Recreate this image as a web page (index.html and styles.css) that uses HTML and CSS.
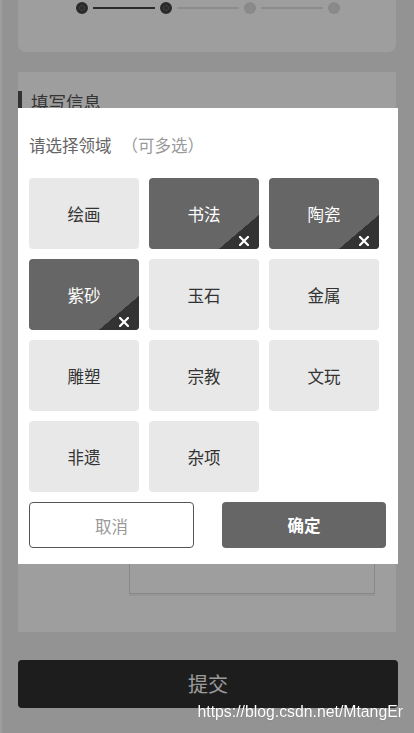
FILE: index.html
```html
<!DOCTYPE html>
<html>
	<head>
		<meta charset="utf-8">
		<title>填写信息</title>
		<link rel="stylesheet" href="styles.css">
	</head>
	<body>
		<div class="page">
			<div class="step_box">
				<div class="steps">
					<span class="dot on"></span><span class="line on"></span>
					<span class="dot on"></span><span class="line"></span>
					<span class="dot"></span><span class="line"></span>
					<span class="dot"></span>
				</div>
			</div>
			<div class="info_box">
				<div class="info_tit">填写信息</div>
				<div class="info_body">
					<div class="info_area"></div>
				</div>
			</div>
			<div class="submit">提交</div>
		</div>

		<!-- 遮罩 -->
		<div class="mask"></div>

		<!-- 选择领域 -->
		<div class="field_pop">
			<div class="pop_tit">请选择领域<span>（可多选）</span></div>
			<div class="field_list">
				<div class="field_item">绘画</div>
				<div class="field_item active">书法<span class="tick"><svg width="10" height="10" viewBox="0 0 10 10"><path d="M1 1L9 9M9 1L1 9" stroke="#fff" stroke-width="2.2" stroke-linecap="square"/></svg></span></div>
				<div class="field_item active">陶瓷<span class="tick"><svg width="10" height="10" viewBox="0 0 10 10"><path d="M1 1L9 9M9 1L1 9" stroke="#fff" stroke-width="2.2" stroke-linecap="square"/></svg></span></div>
				<div class="field_item active">紫砂<span class="tick"><svg width="10" height="10" viewBox="0 0 10 10"><path d="M1 1L9 9M9 1L1 9" stroke="#fff" stroke-width="2.2" stroke-linecap="square"/></svg></span></div>
				<div class="field_item">玉石</div>
				<div class="field_item">金属</div>
				<div class="field_item">雕塑</div>
				<div class="field_item">宗教</div>
				<div class="field_item">文玩</div>
				<div class="field_item">非遗</div>
				<div class="field_item">杂项</div>
			</div>
			<div class="pop_btns">
				<div class="btn_cancel">取消</div>
				<div class="btn_ok">确定</div>
			</div>
		</div>

		<div class="watermark">https://blog.csdn.net/MtangEr</div>
	</body>
</html>
```

FILE: styles.css
```css
html, body {
	margin: 0;
	height: 100%;
	overflow: hidden;
}
body {
	background: #ededed;
	font-family: "Noto Sans CJK SC", "Liberation Sans", sans-serif;
	color: #333;
}
.page {
	border-left: 2px solid #ffffff;
	padding-left: 16px;
	height: 100%;
	box-sizing: border-box;
}

/* 步骤 */
.step_box {
	width: 378px;
	height: 52px;
	background: #fff;
	border-radius: 0 0 8px 8px;
	box-sizing: border-box;
}
.steps {
	display: flex;
	align-items: center;
	padding: 2px 0 0 58px;
}
.steps .dot {
	width: 12px;
	height: 12px;
	border-radius: 50%;
	background: #dedede;
	box-sizing: border-box;
}
.steps .dot.on {
	background: #444;
	border: 3px solid #444;
	box-shadow: inset 0 0 0 1px #6a6a6a;
}
.steps .line {
	width: 62px;
	height: 2px;
	margin: 0 5px;
	background: #e2e2e2;
}
.steps .line.on {
	background: #444;
}

/* 填写信息 */
.info_box {
	width: 378px;
	height: 560px;
	margin-top: 20px;
	background: #fff;
	padding-top: 19px;
	box-sizing: border-box;
	display: flex;
	flex-direction: column;
}
.info_tit {
	border-left: 4px solid #525252;
	padding-left: 9px;
	height: 20px;
	line-height: 22px;
	font-size: 17.5px;
	color: #555;
}
.info_body {
	flex: 1;
	display: flex;
	flex-direction: column;
	justify-content: flex-end;
	padding: 0 21px 38px 111px;
}
.info_area {
	height: 60px;
	border: 1px solid #dcdcdc;
	box-shadow: 0 2px 0 #f2f2f2;
}
.submit {
	width: 380px;
	height: 48px;
	margin-top: 28px;
	background: #303030;
	border-radius: 4px;
	color: #fafafa;
	font-size: 20px;
	text-align: center;
	line-height: 48px;
}

/* 遮罩 */
.mask {
	position: fixed;
	top: 0;
	left: 0;
	right: 0;
	bottom: 0;
	background: rgba(0, 0, 0, .38);
	z-index: 10;
}

/* 弹窗 */
.field_pop {
	position: fixed;
	top: 108px;
	left: 18px;
	width: 380px;
	height: 456px;
	background: #fff;
	z-index: 11;
	padding: 26px 12px 0 11px;
	box-sizing: border-box;
}
.pop_tit {
	font-size: 16.5px;
	line-height: 22px;
	color: #666;
	margin-bottom: 22px;
}
.pop_tit span {
	color: #999;
	margin-left: 10px;
}
.field_list {
	display: grid;
	grid-template-columns: repeat(3, 110px);
	grid-auto-rows: 71px;
	column-gap: 10px;
	row-gap: 10px;
}
.field_item {
	position: relative;
	overflow: hidden;
	background: #e8e8e8;
	border-radius: 4px;
	font-size: 16.5px;
	color: #333;
	display: flex;
	align-items: center;
	justify-content: center;
}
.field_item.active {
	background: #666;
	color: #fff;
}
.field_item .tick {
	position: absolute;
	right: 0;
	bottom: 0;
	width: 40px;
	height: 34px;
	background: linear-gradient(to top left, #333 50%, transparent 50.5%);
}
.field_item .tick svg {
	position: absolute;
	right: 10px;
	bottom: 3px;
}
.pop_btns {
	display: flex;
	justify-content: space-between;
	margin-top: 10px;
}
.btn_cancel, .btn_ok {
	width: 165px;
	height: 46px;
	line-height: 46px;
	border-radius: 4px;
	text-align: center;
	font-size: 16.5px;
	box-sizing: border-box;
}
.btn_cancel {
	border: 1px solid #555;
	color: #999;
}
.btn_ok {
	width: 164px;
	background: #666;
	color: #fff;
	font-weight: bold;
}

.watermark {
	position: fixed;
	right: 11px;
	top: 703px;
	z-index: 12;
	font-family: "Liberation Sans", sans-serif;
	font-size: 15.8px;
	color: #fff;
	text-shadow: 0 0 1px rgba(0, 0, 0, .3);
}
```
